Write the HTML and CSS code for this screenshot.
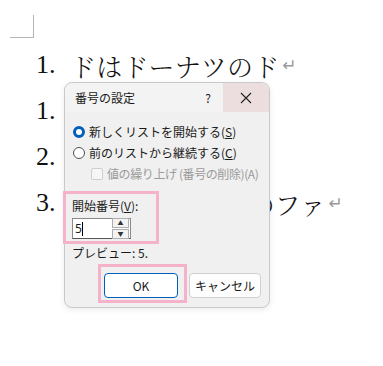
FILE: index.html
```html
<!DOCTYPE html>
<html lang="ja">
<head>
  <meta charset="UTF-8">
  <title>番号の設定</title>
  <link rel="stylesheet" href="styles.css">
</head>
<body>
  <div class="page">
    <div class="corner"></div>

    <div class="doc">
      <div class="line"><span class="num">1.</span><span class="txt">ドはドーナツのド</span><span class="mark">↵</span></div>
      <div class="line"><span class="num">1.</span></div>
      <div class="line"><span class="num">2.</span></div>
      <div class="line"><span class="num">3.</span><span class="txt">ファはファイトのファ</span><span class="mark">↵</span></div>
    </div>

    <div class="dialog">
      <div class="dialog-title">
        <span class="title-text">番号の設定</span>
        <span class="help">?</span>
        <span class="close">
          <svg width="12" height="12" viewBox="0 0 12 12"><path d="M1 1 L11 11 M11 1 L1 11" stroke="#222" stroke-width="1.1" fill="none"/></svg>
        </span>
      </div>

      <div class="dialog-body">
        <div class="row">
          <span class="radio checked"></span>
          <span>新しくリストを開始する(<u>S</u>)</span>
        </div>
        <div class="row">
          <span class="radio"></span>
          <span>前のリストから継続する(<u>C</u>)</span>
        </div>
        <div class="row sub disabled">
          <span class="check"></span>
          <span class="tight">値の繰り上げ (番号の削除)(A)</span>
        </div>

        <div class="hl start-group">
          <div class="label">開始番号(<u>V</u>):</div>
          <div class="spin-input">
            <span class="value">5</span><span class="caret"></span>
            <span class="spin">
              <span class="spin-btn">▲</span>
              <span class="spin-btn">▼</span>
            </span>
          </div>
        </div>

        <div class="preview">プレビュー:&nbsp;5.</div>

        <div class="buttons">
          <span class="hl ok-wrap"><button class="btn primary">OK</button></span>
          <button class="btn">キャンセル</button>
        </div>
      </div>
    </div>
  </div>
</body>
</html>
```

FILE: styles.css
```css
body {
  margin: 0;
  background-color: #fff;
}

.page {
  position: relative;
  width: 383px;
  height: 366px;
  overflow: hidden;
}

/* 余白のトンボ */
.corner {
  position: absolute;
  left: 10px;
  top: 15px;
  width: 23px;
  height: 22px;
  border-right: 1px solid #b5b5b5;
  border-bottom: 1px solid #b5b5b5;
}

.doc {
  padding-top: 42px;
  padding-left: 36px;
  font-family: "Liberation Serif", "Noto Serif CJK JP", "Noto Sans CJK JP", serif;
  font-size: 26px;
  color: #111;
}

.line {
  display: flex;
  align-items: center;
  height: 46px;
  white-space: nowrap;
}

.num {
  width: 34px;
}

.txt {
  font-family: "Noto Serif CJK JP", "Noto Sans CJK JP", serif;
  font-weight: 300;
  letter-spacing: 0.2px;
}

.line:last-child .txt {
  letter-spacing: -0.3px;
}

.mark {
  font-family: "DejaVu Sans", sans-serif;
  font-size: 17px;
  color: #999;
  margin-left: 3px;
}

/* ダイアログ */
.dialog {
  position: absolute;
  left: 64px;
  top: 82px;
  width: 204px;
  border: 1px solid #c9c9c9;
  border-radius: 8px;
  background-color: #f0f0f0;
  box-shadow: 0 2px 6px rgba(0, 0, 0, 0.08);
  font-family: "Noto Sans CJK JP", "Noto Sans", sans-serif;
  font-size: 12px;
  color: #1a1a1a;
}

.dialog-title {
  display: flex;
  align-items: center;
  height: 29px;
  background-color: #f3f3f3;
  border-radius: 8px 8px 0 0;
}

.title-text {
  padding-left: 10px;
  flex: 1;
}

.help {
  width: 20px;
  margin-right: 5px;
  text-align: center;
}

.close {
  display: flex;
  align-items: center;
  justify-content: center;
  width: 46px;
  height: 100%;
  background-color: #ecdede;
  border-radius: 0 8px 0 0;
}

.dialog-body {
  padding: 9px 8px 4px 8px;
}

.row {
  display: flex;
  align-items: center;
  gap: 4px;
  height: 21px;
  white-space: nowrap;
}

.row.sub {
  padding-left: 18px;
}

.tight {
  letter-spacing: -0.4px;
}

.disabled {
  color: #9a9a9a;
}

.radio {
  box-sizing: border-box;
  width: 12px;
  height: 12px;
  border: 1px solid #505050;
  border-radius: 50%;
  background-color: #fff;
}

.radio.checked {
  border: 3.5px solid #005fb8;
}

.check {
  box-sizing: border-box;
  width: 12px;
  height: 12px;
  border: 1px solid #cfcfcf;
  border-radius: 2px;
  background-color: #f6f6f6;
}

/* ピンクの強調枠 */
.hl {
  border: 3px solid #f4b3cb;
}

.start-group {
  width: 84px;
  margin: 7px 0 0 -10px;
  padding: 4px 0 2px 6px;
}

.label {
  height: 16px;
  line-height: 16px;
}

.spin-input {
  display: flex;
  align-items: center;
  box-sizing: border-box;
  width: 59px;
  height: 21px;
  margin-top: 4px;
  padding-left: 2px;
  border: 1px solid #8a8a8a;
  border-bottom-color: #555;
  background-color: #fff;
}

.value {
  font-family: "Noto Sans", sans-serif;
  font-size: 12px;
}

.caret {
  width: 1px;
  height: 14px;
  background-color: #000;
}

.spin {
  display: flex;
  flex-direction: column;
  gap: 1px;
  margin-left: auto;
  margin-right: 1px;
}

.spin-btn {
  display: flex;
  align-items: center;
  justify-content: center;
  width: 15px;
  height: 8px;
  border: 1px solid #adadad;
  background-color: #f3f3f3;
  font-size: 6px;
  color: #333;
  line-height: 1;
}

.preview {
  height: 16px;
  line-height: 16px;
  margin-top: 1px;
  margin-left: -1px;
}

.buttons {
  display: flex;
  align-items: flex-end;
  margin-top: 3px;
  margin-left: 25px;
}

.ok-wrap {
  display: inline-block;
  padding: 6px 6px 2px 3px;
}

.btn {
  box-sizing: border-box;
  width: 74px;
  height: 25px;
  padding: 0;
  border: 1px solid #d0d0d0;
  border-radius: 4px;
  background-color: #fdfdfd;
  font-family: "Noto Sans CJK JP", "Noto Sans", sans-serif;
  font-size: 12px;
  color: #1a1a1a;
}

.ok-wrap + .btn {
  margin-left: 2px;
  margin-bottom: 5px;
  width: 73px;
}

.btn.primary {
  display: block;
  border: 1.5px solid #005fb8;
  background-color: #fff;
}
```
